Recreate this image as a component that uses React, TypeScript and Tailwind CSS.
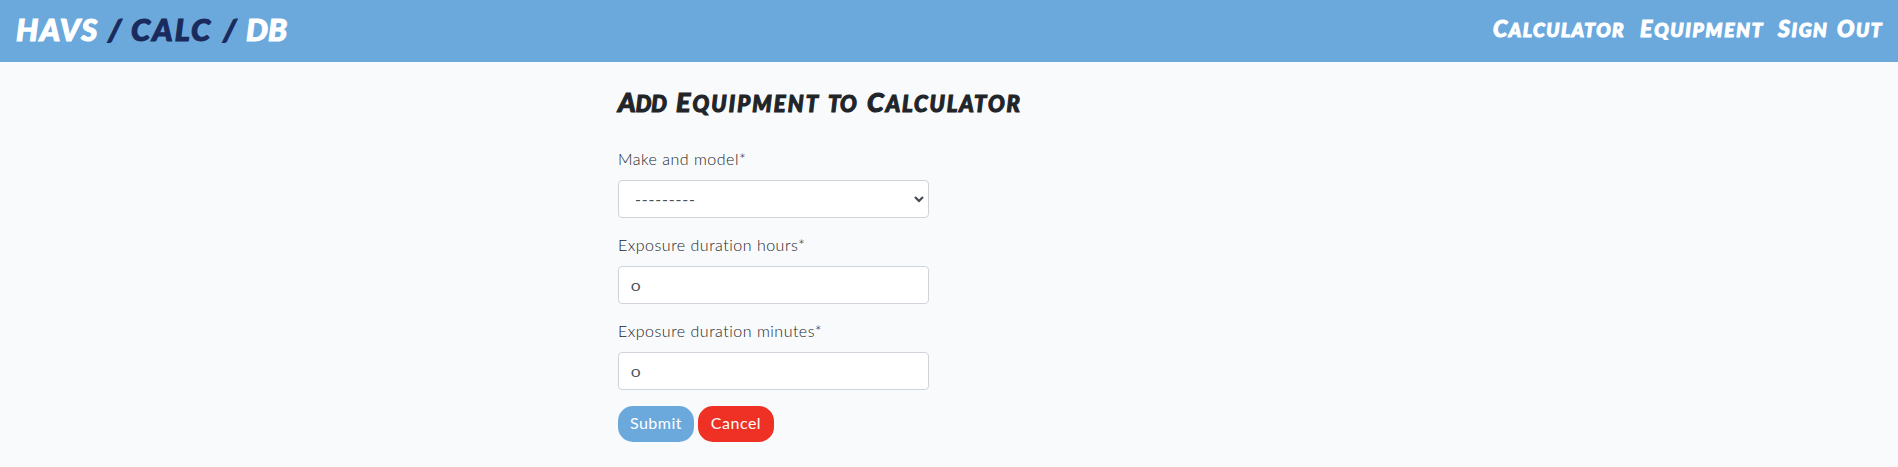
import React from "react";

const marker = "inline-block font-['Lato','Liberation_Sans',sans-serif] font-black italic uppercase whitespace-nowrap [-webkit-text-stroke:1.1px_currentColor]";

function Field({ label, labelClass, children }: { label: string; labelClass: string; children: React.ReactNode }) {
  return (
    <div className="mb-4">
      <label className={`mb-[9px] block h-[23px] text-[16px] font-light leading-[22px] text-[#212529] ${labelClass}`}>{label}</label>
      {children}
    </div>
  );
}

const box = "flex h-[38px] w-[311px] items-center rounded-[4px] border border-[#ced4da] bg-white text-[#495057]";

export default function App() {
  return (
    <div className="min-h-[467px] bg-[#f9fafc] font-['Lato','Liberation_Sans',sans-serif]">
      <header className="flex h-[62px] items-center justify-between bg-[#6ba9dd] pl-4 pr-[14px] text-white">
        <a className="flex h-[62px] items-center pb-[4px] text-[31px] leading-none">
          <span className={`${marker} w-[92px] tracking-[1.5px]`}>HAVS</span>
          <span className={`${marker} w-[23px] text-[#1b2a5c]`}>/</span>
          <span className={`${marker} w-[92px] tracking-[2.1px] text-[#1b2a5c]`}>CALC</span>
          <span className={`${marker} w-[23px] text-[#1b2a5c]`}>/</span>
          <span className={`${marker} w-[42px]`}>DB</span>
        </a>
        <nav className="flex items-baseline pb-[5px] text-[19px] leading-6">
          <a className={`${marker} w-[147px] tracking-[1.5px] first-letter:text-[23px]`}>Calculator</a>
          <a className={`${marker} w-[138px] tracking-[1.8px] first-letter:text-[23px]`}>Equipment</a>
          <a className="flex items-baseline">
            <span className={`${marker} w-[59px] tracking-[1.6px] first-letter:text-[23px]`}>Sign</span>
            <span className={`${marker} w-[47px] tracking-[1.6px] first-letter:text-[23px]`}>Out</span>
          </a>
        </nav>
      </header>
      <main className="ml-[618px] w-[662px] pt-[24px]">
        <h1 className="mb-[30px] flex h-8 items-baseline text-[22px] leading-8 text-[#212529]">
          <span className={`${marker} w-[58px] first-letter:text-[27px]`}>Add</span>
          <span className={`${marker} w-[152px] tracking-[2.1px] first-letter:text-[27px]`}>Equipment</span>
          <span className={`${marker} w-[39px]`}>to</span>
          <span className={`${marker} w-[154px] tracking-[1.9px] first-letter:text-[27px]`}>Calculator</span>
        </h1>
        <Field label="Make and model*" labelClass="tracking-[0.5px]">
          <div className={`${box} justify-between pl-4 pr-[4px]`}>
            <span className="tracking-[0.8px]">---------</span>
            <svg width="10" height="7" viewBox="0 0 10 7" fill="none" stroke="#444a50" strokeWidth="2.2">
              <path d="M1 1l4 4 4-4" />
            </svg>
          </div>
        </Field>
        <Field label="Exposure duration hours*" labelClass="tracking-[0.5px]">
          <div className={`${box} pl-3 pt-[3px] text-[13px]`}><span className="inline-block origin-left scale-x-[1.25] scale-y-95">0</span></div>
        </Field>
        <Field label="Exposure duration minutes*" labelClass="tracking-[0.5px]">
          <div className={`${box} pl-3 pt-[3px] text-[13px]`}><span className="inline-block origin-left scale-x-[1.25] scale-y-95">0</span></div>
        </Field>
        <div className="flex gap-1 text-[16px] text-white">
          <button className="h-9 w-[76px] rounded-[15px] bg-[#6ba9dd] pb-[2px] tracking-[0.5px]">Submit</button>
          <button className="h-9 w-[76px] rounded-[15px] bg-[#ee3124] pb-[2px] tracking-[0.5px]">Cancel</button>
        </div>
      </main>
    </div>
  );
}
